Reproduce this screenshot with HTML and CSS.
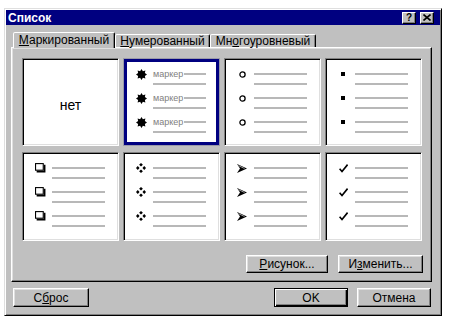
FILE: index.html
```html
<!DOCTYPE html>
<html lang="ru">
  <head>
    <meta charset="UTF-8" />
    <meta name="viewport" content="width=device-width, initial-scale=1.0" />
    <title>Список</title>
    <link rel="stylesheet" href="styles.css">
  </head>
  <body>
    <div class="window">
      <div class="titlebar">
        <span class="title">Список</span>
        <span class="cap-btns">
          <span class="cap-btn">?</span>
          <span class="cap-btn">
            <svg width="8" height="7" viewBox="0 0 8 7"><path d="M0.5 0.5L7.5 6.5M7.5 0.5L0.5 6.5" stroke="#000" stroke-width="1.6"/></svg>
          </span>
        </span>
      </div>

      <div class="content">
        <div class="tabs">
          <div class="tab active"><u>М</u>аркированный</div>
          <div class="tab tab-num"><u>Н</u>умерованный</div>
          <div class="tab tab-multi">Мн<u>о</u>гоуровневый</div>
        </div>

        <div class="panel">
          <div class="grid">
            <div class="cell none">нет</div>

            <div class="cell selected">
              <div class="item">
                <span class="mark"><svg width="11" height="11" viewBox="0 0 10 10"><polygon points="10,5 8.05,6.26 8.54,8.54 6.26,8.05 5,10 3.74,8.05 1.46,8.54 1.95,6.26 0,5 1.95,3.74 1.46,1.46 3.74,1.95 5,0 6.26,1.95 8.54,1.46 8.05,3.74"/></svg></span>
                <span class="lines"><span class="lead"><span class="sample">маркер</span><i></i></span><i></i></span>
              </div>
              <div class="item">
                <span class="mark"><svg width="11" height="11" viewBox="0 0 10 10"><polygon points="10,5 8.05,6.26 8.54,8.54 6.26,8.05 5,10 3.74,8.05 1.46,8.54 1.95,6.26 0,5 1.95,3.74 1.46,1.46 3.74,1.95 5,0 6.26,1.95 8.54,1.46 8.05,3.74"/></svg></span>
                <span class="lines"><span class="lead"><span class="sample">маркер</span><i></i></span><i></i></span>
              </div>
              <div class="item">
                <span class="mark"><svg width="11" height="11" viewBox="0 0 10 10"><polygon points="10,5 8.05,6.26 8.54,8.54 6.26,8.05 5,10 3.74,8.05 1.46,8.54 1.95,6.26 0,5 1.95,3.74 1.46,1.46 3.74,1.95 5,0 6.26,1.95 8.54,1.46 8.05,3.74"/></svg></span>
                <span class="lines"><span class="lead"><span class="sample">маркер</span><i></i></span><i></i></span>
              </div>
            </div>

            <div class="cell">
              <div class="item">
                <span class="mark"><svg width="7" height="7" viewBox="0 0 7 7"><circle cx="3.5" cy="3.5" r="2.6" fill="none" stroke="#000" stroke-width="1.3"/></svg></span>
                <span class="lines"><i></i><i></i></span>
              </div>
              <div class="item">
                <span class="mark"><svg width="7" height="7" viewBox="0 0 7 7"><circle cx="3.5" cy="3.5" r="2.6" fill="none" stroke="#000" stroke-width="1.3"/></svg></span>
                <span class="lines"><i></i><i></i></span>
              </div>
              <div class="item">
                <span class="mark"><svg width="7" height="7" viewBox="0 0 7 7"><circle cx="3.5" cy="3.5" r="2.6" fill="none" stroke="#000" stroke-width="1.3"/></svg></span>
                <span class="lines"><i></i><i></i></span>
              </div>
            </div>

            <div class="cell">
              <div class="item">
                <span class="mark"><b class="dot"></b></span>
                <span class="lines"><i></i><i></i></span>
              </div>
              <div class="item">
                <span class="mark"><b class="dot"></b></span>
                <span class="lines"><i></i><i></i></span>
              </div>
              <div class="item">
                <span class="mark"><b class="dot"></b></span>
                <span class="lines"><i></i><i></i></span>
              </div>
            </div>

            <div class="cell">
              <div class="item">
                <span class="mark"><svg width="11" height="10" viewBox="0 0 10 9"><rect x="0.5" y="0.5" width="7" height="6" fill="#fff" stroke="#000"/><path d="M1.5 7.75H8.75V1.5" fill="none" stroke="#000" stroke-width="1.5"/></svg></span>
                <span class="lines"><i></i><i></i></span>
              </div>
              <div class="item">
                <span class="mark"><svg width="11" height="10" viewBox="0 0 10 9"><rect x="0.5" y="0.5" width="7" height="6" fill="#fff" stroke="#000"/><path d="M1.5 7.75H8.75V1.5" fill="none" stroke="#000" stroke-width="1.5"/></svg></span>
                <span class="lines"><i></i><i></i></span>
              </div>
              <div class="item">
                <span class="mark"><svg width="11" height="10" viewBox="0 0 10 9"><rect x="0.5" y="0.5" width="7" height="6" fill="#fff" stroke="#000"/><path d="M1.5 7.75H8.75V1.5" fill="none" stroke="#000" stroke-width="1.5"/></svg></span>
                <span class="lines"><i></i><i></i></span>
              </div>
            </div>

            <div class="cell">
              <div class="item">
                <span class="mark"><svg width="10" height="10" viewBox="0 0 9 9"><path d="M4.5 0L6.2 1.6L4.5 3.2L2.8 1.6ZM1.6 2.8L3.2 4.5L1.6 6.2L0 4.5ZM7.4 2.8L9 4.5L7.4 6.2L5.8 4.5ZM4.5 5.8L6.2 7.4L4.5 9L2.8 7.4Z"/></svg></span>
                <span class="lines"><i></i><i></i></span>
              </div>
              <div class="item">
                <span class="mark"><svg width="10" height="10" viewBox="0 0 9 9"><path d="M4.5 0L6.2 1.6L4.5 3.2L2.8 1.6ZM1.6 2.8L3.2 4.5L1.6 6.2L0 4.5ZM7.4 2.8L9 4.5L7.4 6.2L5.8 4.5ZM4.5 5.8L6.2 7.4L4.5 9L2.8 7.4Z"/></svg></span>
                <span class="lines"><i></i><i></i></span>
              </div>
              <div class="item">
                <span class="mark"><svg width="10" height="10" viewBox="0 0 9 9"><path d="M4.5 0L6.2 1.6L4.5 3.2L2.8 1.6ZM1.6 2.8L3.2 4.5L1.6 6.2L0 4.5ZM7.4 2.8L9 4.5L7.4 6.2L5.8 4.5ZM4.5 5.8L6.2 7.4L4.5 9L2.8 7.4Z"/></svg></span>
                <span class="lines"><i></i><i></i></span>
              </div>
            </div>

            <div class="cell">
              <div class="item">
                <span class="mark"><svg width="10" height="9" viewBox="0 0 10 9"><polygon points="0,0 10,4.5 0,9 3,4.5"/><path d="M1.5 1.6L7.5 4.5" stroke="#fff" stroke-width="0.6"/></svg></span>
                <span class="lines"><i></i><i></i></span>
              </div>
              <div class="item">
                <span class="mark"><svg width="10" height="9" viewBox="0 0 10 9"><polygon points="0,0 10,4.5 0,9 3,4.5"/><path d="M1.5 1.6L7.5 4.5" stroke="#fff" stroke-width="0.6"/></svg></span>
                <span class="lines"><i></i><i></i></span>
              </div>
              <div class="item">
                <span class="mark"><svg width="10" height="9" viewBox="0 0 10 9"><polygon points="0,0 10,4.5 0,9 3,4.5"/><path d="M1.5 1.6L7.5 4.5" stroke="#fff" stroke-width="0.6"/></svg></span>
                <span class="lines"><i></i><i></i></span>
              </div>
            </div>

            <div class="cell">
              <div class="item">
                <span class="mark"><svg width="9" height="9" viewBox="0 0 9 9"><path d="M0.6 4.8L3 7.6L8.6 0.6" fill="none" stroke="#000" stroke-width="1.6"/></svg></span>
                <span class="lines"><i></i><i></i></span>
              </div>
              <div class="item">
                <span class="mark"><svg width="9" height="9" viewBox="0 0 9 9"><path d="M0.6 4.8L3 7.6L8.6 0.6" fill="none" stroke="#000" stroke-width="1.6"/></svg></span>
                <span class="lines"><i></i><i></i></span>
              </div>
              <div class="item">
                <span class="mark"><svg width="9" height="9" viewBox="0 0 9 9"><path d="M0.6 4.8L3 7.6L8.6 0.6" fill="none" stroke="#000" stroke-width="1.6"/></svg></span>
                <span class="lines"><i></i><i></i></span>
              </div>
            </div>
          </div>

          <div class="panel-btns">
            <button type="button" class="btn btn-picture"><u>Р</u>исунок...</button>
            <button type="button" class="btn btn-edit">И<u>з</u>менить...</button>
          </div>
        </div>

        <div class="footer">
          <button type="button" class="btn btn-reset">С<u>б</u>рос</button>
          <span class="spacer"></span>
          <button type="button" class="btn btn-default">OK</button>
          <button type="button" class="btn">Отмена</button>
        </div>
      </div>
    </div>
  </body>
</html>
```

FILE: styles.css
```css
body {
  margin: 0;
  background-color: #ffffff;
  font-family: "Liberation Sans", Arial, sans-serif;
  font-size: 12px;
  color: #000;
}

.window {
  box-sizing: border-box;
  width: 438px;
  height: 308px;
  margin: 8px 0 0 4px;
  padding: 1px;
  background-color: #c0c0c0;
  border: 1px solid;
  border-color: #dfdfdf #000 #000 #dfdfdf;
  box-shadow: inset 1px 1px #fff, inset -1px -1px #808080;
}

.titlebar {
  height: 15px;
  padding: 0 6px 0 2px;
  background-color: #000080;
  color: #fff;
  display: flex;
  align-items: center;
  justify-content: space-between;
}

.title {
  font-weight: bold;
  font-size: 12px;
}

.cap-btns {
  display: flex;
  gap: 4px;
}

.cap-btn {
  box-sizing: border-box;
  width: 14px;
  height: 12px;
  background-color: #c0c0c0;
  border: 1px solid;
  border-color: #fff #000 #000 #fff;
  box-shadow: inset -1px -1px #808080;
  display: flex;
  align-items: center;
  justify-content: center;
  color: #000;
  font-weight: bold;
  font-size: 10px;
  line-height: 10px;
}

.content {
  padding: 7px 8px 0 5px;
}

/* tabs */
.tabs {
  display: flex;
  align-items: flex-end;
  height: 15px;
  padding-left: 2px;
}

.tab {
  box-sizing: border-box;
  height: 13px;
  border: 1px solid;
  border-bottom: none;
  border-color: #fff #000 transparent #fff;
  border-radius: 2px 2px 0 0;
  box-shadow: inset -1px 0 #808080;
  text-align: center;
  line-height: 12px;
  background-color: #c0c0c0;
}

.tab.active {
  width: 102px;
  height: 16px;
  line-height: 14px;
  margin-bottom: -1px;
  position: relative;
  z-index: 1;
}

.tab-num {
  width: 95px;
}

.tab-multi {
  width: 106px;
}

.panel {
  box-sizing: border-box;
  width: 421px;
  height: 235px;
  padding: 10px 8px 0 10px;
  border: 1px solid;
  border-color: #fff #000 #000 #fff;
  box-shadow: inset -1px -1px #808080, inset 1px 1px #dfdfdf;
}

/* bullet cells */
.grid {
  display: grid;
  grid-template-columns: repeat(4, 97px);
  grid-template-rows: 88px 89px;
  column-gap: 4px;
  row-gap: 6px;
}

.cell {
  box-sizing: border-box;
  background-color: #fff;
  padding-top: 10px;
  border: 1px solid;
  border-color: #808080 #fff #fff #808080;
  box-shadow: inset 1px 1px #000, inset -1px -1px #dfdfdf;
}

.cell.none {
  display: flex;
  align-items: center;
  justify-content: center;
  padding-top: 6px;
  font-size: 14px;
}

.cell.selected {
  border-color: #9a9aa8;
  box-shadow: inset 0 0 0 3px #000080;
}

.item {
  display: flex;
  height: 24px;
  padding-left: 11px;
}

.mark {
  width: 12px;
  height: 10px;
  margin-right: 6px;
  display: flex;
  align-items: center;
  justify-content: center;
}

.dot {
  display: block;
  width: 4px;
  height: 4px;
  background-color: #000;
}

.lines {
  width: 53px;
  padding-top: 4px;
  display: flex;
  flex-direction: column;
  gap: 8px;
}

.lines i {
  display: block;
  height: 2px;
  background-color: #b8b8b8;
}

.lead {
  display: flex;
  align-items: center;
  height: 2px;
  gap: 1px;
}

.lead i {
  flex: 1;
}

.sample {
  font-size: 9px;
  line-height: 2px;
  color: #808080;
}

/* buttons */
.panel-btns {
  display: flex;
  justify-content: flex-end;
  gap: 10px;
  margin-top: 14px;
}

.btn {
  box-sizing: border-box;
  height: 18px;
  padding: 0;
  font-family: inherit;
  font-size: 12px;
  color: #000;
  background-color: #c0c0c0;
  border: 1px solid;
  border-color: #fff #000 #000 #fff;
  box-shadow: inset -1px -1px #808080, inset 1px 1px #dfdfdf;
}

.btn-picture {
  width: 82px;
}

.btn-edit {
  width: 85px;
}

.footer {
  display: flex;
  gap: 9px;
  margin-top: 6px;
  padding: 0 1px 0 2px;
}

.footer .btn {
  width: 74px;
  height: 19px;
}

.footer .btn-reset {
  width: 76px;
}

.spacer {
  flex: 1;
}

.footer .btn-default {
  border-color: #000;
  box-shadow: inset 1px 1px #fff, inset -1px -1px #000, inset -2px -2px #808080;
}
```
